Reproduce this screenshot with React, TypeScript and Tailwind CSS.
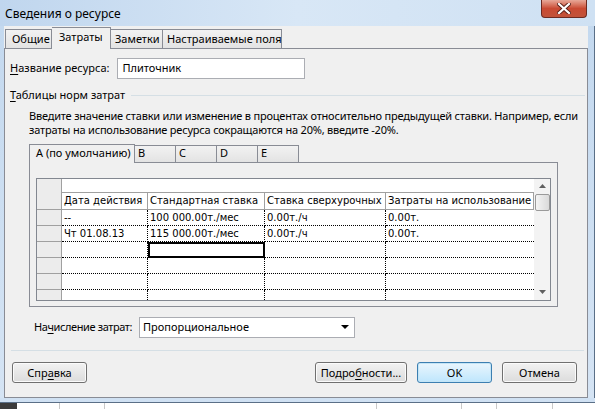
import React from "react";

const ui = { fontFamily: '"Noto Sans", "Liberation Sans", sans-serif' };
const grid = { fontFamily: '"DejaVu Sans", "Liberation Sans", sans-serif' };

function U({ children }: { children: React.ReactNode }) {
  return <span className="underline underline-offset-2">{children}</span>;
}

function Btn({ children, primary = false }: { children: React.ReactNode; primary?: boolean }) {
  return (
    <button
      className={
        "h-[21px] w-full rounded-[3px] border text-[11px] leading-none text-black " +
        (primary
          ? "border-[#3c7fb1] bg-gradient-to-b from-[#eaf6fd] to-[#bee6fd] shadow-[inset_0_0_0_1px_#c4e5f6]"
          : "border-[#707070] bg-gradient-to-b from-[#f2f2f2] to-[#dcdcdc] shadow-[inset_0_0_0_1px_#fbfbfb]")
      }
    >
      {children}
    </button>
  );
}

const rows = [
  ["--", "100 000.00т./мес", "0.00т./ч", "0.00т."],
  ["Чт 01.08.13", "115 000.00т./мес", "0.00т./ч", "0.00т."],
  ["", "", "", ""],
  ["", "", "", ""],
  ["", "", "", ""],
  ["", "", "", ""],
];

const tabOff = "flex items-center border border-b-0 border-l-0 border-[#898c95] bg-gradient-to-b from-[#f2f2f2] to-[#e3e3e3]";

export default function App() {
  return (
    <div className="flex h-[409px] w-[595px] flex-col overflow-hidden whitespace-nowrap bg-[#c8dcf1] text-[11px] text-black" style={ui}>
      {/* title bar */}
      <div className="relative flex h-[26px] shrink-0 items-center bg-gradient-to-r from-[#c0d6ee] via-[#d8e7f6] to-[#cfe1f3] pl-[5px] pt-[2px] text-[12px] text-black">
        Сведения о ресурсе
        <div className="absolute right-[8px] top-0 flex h-[18px] w-[46px] items-center justify-center rounded-b-[4px] border border-t-0 border-[#6d2a20] bg-gradient-to-b from-[#e7a898] via-[#c94a33] to-[#c1533a]">
          <svg width="14" height="11" viewBox="0 0 14 11">
            <path d="M2 1 L12 10 M12 1 L2 10" stroke="#5a2018" strokeWidth="4" strokeLinecap="square" />
            <path d="M2 1 L12 10 M12 1 L2 10" stroke="#ffffff" strokeWidth="2.2" strokeLinecap="square" />
          </svg>
        </div>
      </div>

      <div className="flex min-h-0 flex-1">
        <div className="w-[4px] shrink-0 bg-gradient-to-b from-[#c4d9ef] to-[#d5e4f4]" />
        {/* client */}
        <div className="flex min-w-0 flex-1 flex-col bg-[#f0f0f0]">
          {/* main tabs */}
          <div className="flex h-[22px] shrink-0 items-end pl-[1px]">
            <div className="flex h-[19px] w-[47px] items-center border border-b-0 border-[#898c95] bg-gradient-to-b from-[#f2f2f2] to-[#e3e3e3] pl-[6px]">Общие</div>
            <div className="relative z-10 -mb-px flex h-[22px] w-[59px] items-center border border-b-0 border-l-0 border-[#898c95] bg-[#f0f0f0] pl-[7px] pb-[2px]">Затраты</div>
            <div className={tabOff + " h-[19px] w-[52px] pl-[4px]"}>Заметки</div>
            <div className={tabOff + " h-[19px] w-[119px] pl-[4px]"}>Настраиваемые поля</div>
          </div>
          {/* tab page */}
          <div className="flex min-h-0 flex-1 flex-col border border-[#898c95] bg-[#f0f0f0] pl-[5px] pr-[2px]">
            <div className="mt-[9px] flex items-center gap-[8px]">
              <span>
                <U>Н</U>азвание ресурса:
              </span>
              <div className="flex h-[21px] w-[188px] items-center border border-[#abadb3] bg-white px-[4px]">Плиточник</div>
            </div>

            <div className="mt-[8px] flex items-center gap-[6px]">
              <span>
                <U>Т</U>аблицы норм затрат
              </span>
              <div className="h-px flex-1 bg-[#d5dfe5]" />
            </div>

            <div className="mt-[5px] pl-[19px] leading-[14px] tracking-[-0.2px]">
              <div>Введите значение ставки или изменение в процентах относительно предыдущей ставки. Например, если</div>
              <div>затраты на использование ресурса сокращаются на 20%, введите -20%.</div>
            </div>

            {/* rate tabs */}
            <div className="ml-[19px] mt-[7px] w-[529px]">
              <div className="flex h-[18px] items-end">
                <div className="relative z-10 -mb-px flex h-[19px] w-[106px] items-center border border-b-0 border-[#898c95] bg-[#f0f0f0] pl-[6px]">A (по умолчанию)</div>
                <div className={tabOff + " h-[17px] w-[41px] pl-[3px]"}>B</div>
                <div className={tabOff + " h-[17px] w-[41px] pl-[3px]"}>C</div>
                <div className={tabOff + " h-[17px] w-[41px] pl-[3px]"}>D</div>
                <div className={tabOff + " h-[17px] w-[41px] pl-[3px]"}>E</div>
              </div>
              <div className="h-[145px] border border-[#898c95] bg-[#f0f0f0] px-[6px] pt-[15px]">
                {/* grid */}
                <div className="flex h-[123px] border border-[#828790] bg-white" style={grid}>
                  <div className="flex min-w-0 flex-1 flex-col overflow-hidden text-[10px]">
                    <div className="flex h-[14px] shrink-0">
                      <div className="w-[25px] border-r border-[#a0a0a0] bg-[#ececec]" />
                      <div className="flex-1 border-b border-[#a0a0a0]" />
                    </div>
                    <div className="flex h-[17px] shrink-0 items-center border-b border-[#a0a0a0]">
                      <div className="h-full w-[25px] border-r border-[#a0a0a0] bg-[#ececec]" />
                      <div className="flex h-full w-[86px] items-center border-r border-[#a0a0a0] pl-[2px]">Дата действия</div>
                      <div className="flex h-full w-[117px] items-center border-r border-[#a0a0a0] pl-[2px]">Стандартная ставка</div>
                      <div className="flex h-full w-[121px] items-center border-r border-[#a0a0a0] pl-[2px]">Ставка сверхурочных</div>
                      <div className="flex h-full flex-1 items-center border-r border-[#a0a0a0] pl-[2px]">Затраты на использование</div>
                    </div>
                    {rows.map((r, i) => (
                      <div key={i} className="flex h-[16px] shrink-0">
                        <div className="h-full w-[25px] border-b border-r border-[#a0a0a0] bg-[#ececec]" />
                        <div className="flex h-full w-[86px] items-center border-b border-r border-dotted border-black pl-[2px]">{r[0]}</div>
                        <div
                          className={
                            "flex h-full w-[117px] items-center pl-[2px] " +
                            (i === 2 ? "border-2 border-black" : "border-b border-r border-dotted border-black")
                          }
                        >
                          {r[1]}
                        </div>
                        <div className="flex h-full w-[121px] items-center border-b border-r border-dotted border-black pl-[2px]">{r[2]}</div>
                        <div className="flex h-full flex-1 items-center border-b border-dotted border-black pl-[2px]">{r[3]}</div>
                      </div>
                    ))}
                  </div>
                  {/* scrollbar */}
                  <div className="flex w-[16px] shrink-0 flex-col items-center bg-[#f3f3f3]">
                    <div className="flex h-[15px] items-center justify-center">
                      <svg width="7" height="4" viewBox="0 0 7 4"><path d="M0 4 L3.5 0 L7 4 Z" fill="#606060" /></svg>
                    </div>
                    <div className="h-[17px] w-[15px] rounded-[2px] border border-[#9a9a9a] bg-gradient-to-r from-[#f4f4f4] to-[#dadada]" />
                    <div className="flex-1" />
                    <div className="flex h-[15px] items-center justify-center">
                      <svg width="7" height="4" viewBox="0 0 7 4"><path d="M0 0 L3.5 4 L7 0 Z" fill="#606060" /></svg>
                    </div>
                  </div>
                </div>
              </div>
            </div>

            <div className="mt-[10px] flex items-center pl-[24px]">
              <span className="w-[105px] tracking-[-0.4px]">
                На<U>ч</U>исление затрат:
              </span>
              <div className="flex h-[21px] w-[216px] items-center justify-between border border-[#abadb3] bg-white pl-[3px] pr-[5px]">
                Пропорциональное
                <svg width="8" height="4" viewBox="0 0 8 4"><path d="M0 0 L8 0 L4 4 Z" fill="#000" /></svg>
              </div>
            </div>

            <div className="mx-[1px] mt-[12px] h-px bg-[#d5dfe5]" />

            <div className="mt-[11px] flex items-center pl-[2px] pr-[8px]">
              <div className="w-[75px]">
                <Btn>
                  Спр<U>а</U>вка
                </Btn>
              </div>
              <div className="flex-1" />
              <div className="flex gap-[10px]">
                <div className="w-[92px]">
                  <Btn>
                    Подро<U>б</U>ности...
                  </Btn>
                </div>
                <div className="w-[75px]">
                  <Btn primary>OK</Btn>
                </div>
                <div className="w-[75px]">
                  <Btn>Отмена</Btn>
                </div>
              </div>
            </div>
          </div>
        </div>
        <div className="w-[7px] shrink-0 border-r border-[#5a6f87] bg-gradient-to-b from-[#c4d9ef] to-[#d5e4f4]" />
      </div>
      <div className="h-[5px] shrink-0 border-b border-[#5a6f87] bg-[#d0e1f3]" />
      {/* background app strip */}
      <div className="flex h-[6px] shrink-0 bg-white">
        <div className="w-[17px] bg-[#3b3b3b]" />
        <div className="w-[43px] border-r border-[#c8c8c8]" />
        <div className="w-[45px] border-r border-[#c8c8c8]" />
        <div className="w-[272px] border-r border-[#c8c8c8]" />
        <div className="w-[85px] border-r border-[#c8c8c8]" />
        <div className="w-[35px] border-r border-[#c8c8c8]" />
        <div className="w-[56px] border-r border-[#c8c8c8]" />
      </div>
    </div>
  );
}
